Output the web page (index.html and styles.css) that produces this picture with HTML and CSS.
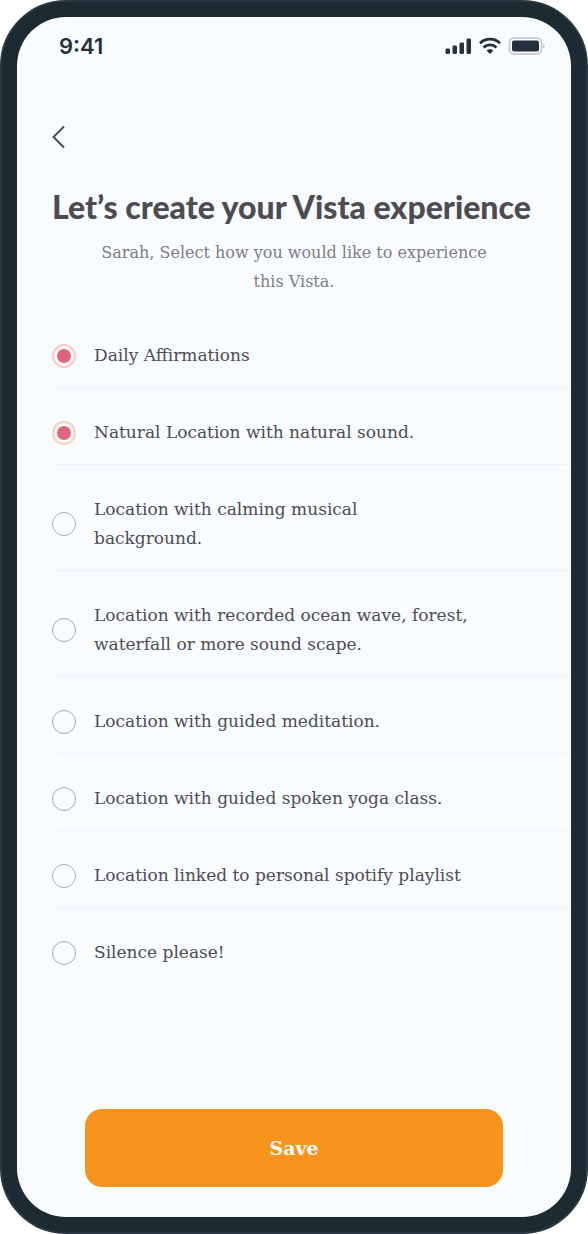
FILE: index.html
```html
<!DOCTYPE html>
<html lang="en">
<head>
    <meta charset="UTF-8">
    <meta name="viewport" content="width=device-width, initial-scale=1.0">
    <title>Create your Vista</title>
    <link rel="stylesheet" href="styles.css">
</head>
<body>

    <div class="phone">
        <div class="screen">

            <!-- Status bar -->
            <div class="status-bar">
                <span class="time">9:41</span>
                <div class="status-icons">
                    <svg width="27" height="18" viewBox="0 0 27 18" fill="#25303a">
                        <rect x="0.5" y="11.5" width="4.5" height="5.5" rx="1.4"/>
                        <rect x="7.5" y="8.5" width="4.5" height="8.5" rx="1.4"/>
                        <rect x="14.5" y="5.5" width="4.5" height="11.5" rx="1.4"/>
                        <rect x="21.5" y="1.5" width="4.5" height="15.5" rx="1.4"/>
                    </svg>
                    <svg width="22" height="18" viewBox="0 0 22 18" fill="none" stroke="#25303a" stroke-width="2.8">
                        <path d="M1 6.2C6.5 .8 15.5 .8 21 6.2"/>
                        <path d="M4.5 10.5C8.2 6.9 13.8 6.9 17.5 10.5"/>
                        <path d="M7.6 13.6C9.5 11.7 12.5 11.7 14.4 13.6L11 17Z" fill="#25303a" stroke="none"/>
                    </svg>
                    <svg width="38" height="18" viewBox="0 0 38 18">
                        <rect x="1.5" y="1" width="32" height="16" rx="4.5" fill="none" stroke="#cfcfd5" stroke-width="2"/>
                        <rect x="4" y="3.5" width="27" height="11" rx="2" fill="#25303a"/>
                        <path d="M34.5 6.2C37.5 7.2 37.5 10.8 34.5 11.8Z" fill="#cfcfd5"/>
                    </svg>
                </div>
            </div>

            <button class="back-btn" type="button" aria-label="Back">
                <svg width="14" height="24" viewBox="0 0 14 24" fill="none" stroke="#4d4c53" stroke-width="2">
                    <path d="M12 1.5L1.5 12L12 22.5"/>
                </svg>
            </button>

            <h1>Let’s create your Vista experience</h1>
            <p class="subtitle">Sarah, Select how you would like to experience this Vista.</p>

            <!-- Options -->
            <form class="options">
                <label class="option"><input type="checkbox" checked><span>Daily Affirmations</span></label>
                <label class="option"><input type="checkbox" checked><span>Natural Location with natural sound.</span></label>
                <label class="option"><input type="checkbox"><span>Location with calming musical background.</span></label>
                <label class="option"><input type="checkbox"><span>Location with recorded ocean wave, forest, waterfall or more sound scape.</span></label>
                <label class="option"><input type="checkbox"><span>Location with guided meditation.</span></label>
                <label class="option"><input type="checkbox"><span>Location with guided spoken yoga class.</span></label>
                <label class="option"><input type="checkbox"><span>Location linked to personal spotify playlist</span></label>
                <label class="option"><input type="checkbox"><span>Silence please!</span></label>
            </form>

            <button class="save-btn" type="button">Save</button>
        </div>
    </div>

</body>
</html>
```

FILE: styles.css
```css
* {
    box-sizing: border-box;
}

body {
    margin: 0;
    background-color: #fff;
    color: #4d4c53;
    font-family: "DejaVu Serif", serif;
}

/* Phone frame */
.phone {
    display: flex;
    min-height: 100vh;
    border: 2px solid #2b3740;
    border-radius: 66px;
    background-color: #1e2a31;
    padding: 15px;
}

.screen {
    flex: 1;
    min-width: 0;
    display: flex;
    flex-direction: column;
    background-color: #f9fcff;
    border-radius: 49px;
    padding: 17px 0 30px 35px;
}

/* Status bar */
.status-bar {
    display: flex;
    justify-content: space-between;
    align-items: center;
    height: 24px;
    padding: 0 25px 0 7px;
}

.time {
    font-family: Inter, sans-serif;
    font-size: 22px;
    font-weight: 600;
    color: #25303a;
}

.status-icons {
    display: flex;
    gap: 7px;
}

.back-btn {
    align-self: flex-start;
    display: flex;
    margin-top: 67px;
    padding: 0;
    border: none;
    background: none;
    cursor: pointer;
}

h1 {
    margin: 39px 0 0;
    font-family: Lato, sans-serif;
    font-size: 32px;
    font-weight: 900;
    line-height: 38px;
}

.subtitle {
    width: 400px;
    max-width: 100%;
    margin: 12px auto 0;
    padding-right: 35px;
    box-sizing: content-box;
    font-size: 16px;
    line-height: 29px;
    text-align: center;
    color: #7d7c84;
}

/* Options */
.options {
    margin-top: 15px;
}

.option {
    display: flex;
    align-items: center;
    gap: 18px;
    padding: 30px 0 17px;
    border-bottom: 1px solid #f1f2f5;
    font-size: 17px;
    line-height: 29px;
    cursor: pointer;
}

.option:last-child {
    border-bottom: none;
}

.option span {
    max-width: 375px;
}

.option input {
    appearance: none;
    flex: none;
    width: 24px;
    height: 24px;
    margin: 0;
    border: 1px solid #a9a8ae;
    border-radius: 50%;
    cursor: pointer;
}

.option input:checked {
    border: 2px solid #fbcdbd;
    padding: 3px;
    background-color: #de6478;
    background-clip: content-box;
}

.save-btn {
    margin: auto 68px 0 33px;
    height: 78px;
    border: none;
    border-radius: 17px;
    background-color: #f7941e;
    color: #fff;
    font-family: inherit;
    font-size: 19px;
    font-weight: 700;
    cursor: pointer;
}
```
